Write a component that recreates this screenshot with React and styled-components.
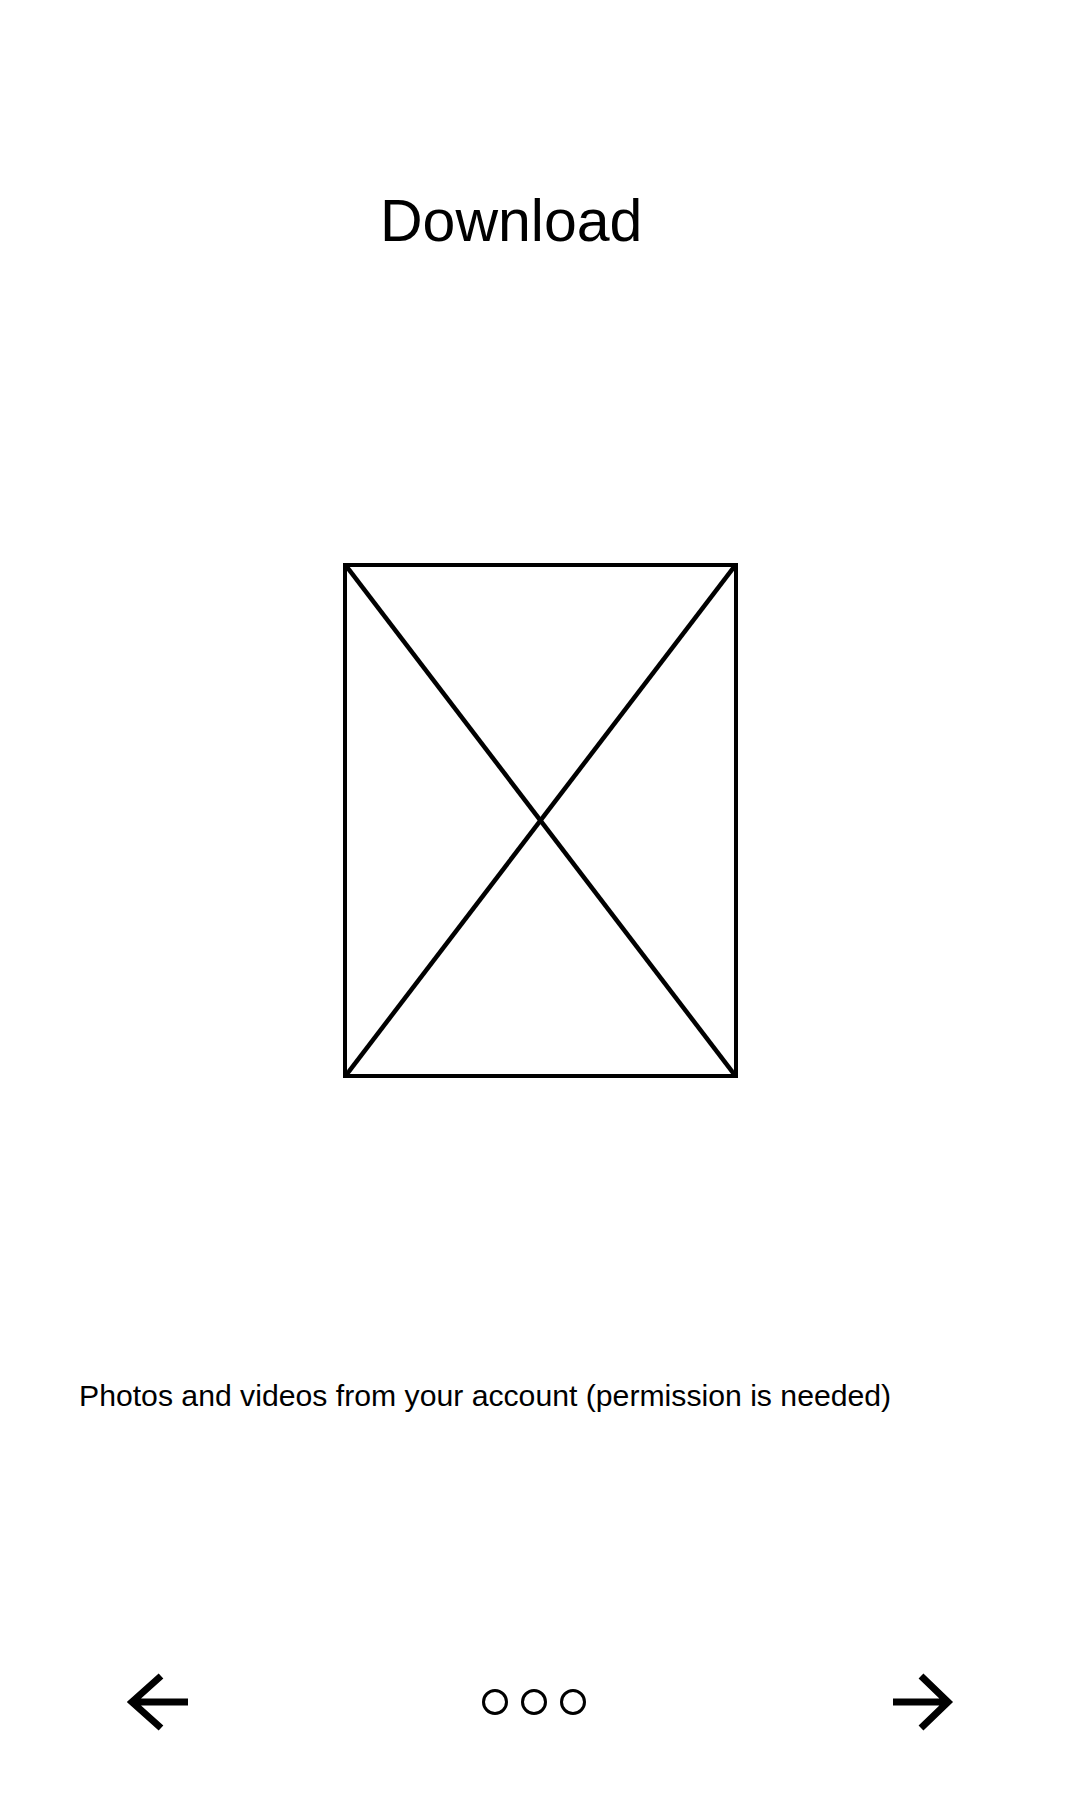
import * as React from 'react'
import styled, { createGlobalStyle } from 'styled-components'

const GlobalStyle = createGlobalStyle`
  html, body {
    margin: 0;
    padding: 0;
    background: #fff;
  }
  body {
    font-family: 'Liberation Sans', Arial, sans-serif;
    color: #000;
  }
`

/**
 * Onboarding page for the download step.
 * @return {JSX.Element}
 */
const App = () =>
  <>
    <GlobalStyle />
    <Page>
      <Title>Download</Title>
      <Placeholder>
        <svg width='100%' height='100%' viewBox='0 0 387 507' preserveAspectRatio='none'>
          <line x1='0' y1='0' x2='387' y2='507' stroke='#000' strokeWidth='4.5' />
          <line x1='387' y1='0' x2='0' y2='507' stroke='#000' strokeWidth='4.5' />
        </svg>
      </Placeholder>
      <Caption>Photos and videos from your account (permission is needed)</Caption>
      <Nav>
        <ArrowButton aria-label='Back'>
          <svg width='68' height='60' viewBox='0 0 68 60'>
            <path d='M8 30 H64 M37 4 L8 30 L37 56' fill='none' stroke='#000' strokeWidth='7' />
          </svg>
        </ArrowButton>
        <Dots>
          <Dot />
          <Dot />
          <Dot />
        </Dots>
        <ArrowButton aria-label='Next' $next>
          <svg width='68' height='60' viewBox='0 0 68 60'>
            <path d='M3 30 H58 M31 4 L58 30 L31 56' fill='none' stroke='#000' strokeWidth='7' />
          </svg>
        </ArrowButton>
      </Nav>
    </Page>
  </>

const Page = styled.div`
  width: 1080px;
  height: 1800px;
  display: flex;
  flex-direction: column;
`

const Title = styled.h1`
  margin: 192px 0 0;
  padding-left: 380px;
  font-size: 59px;
  line-height: 59px;
  font-weight: 400;
`

const Placeholder = styled.div`
  margin-top: 312px;
  margin-left: 343px;
  width: 387px;
  height: 507px;
  border: 4px solid #000;
  display: flex;
`

const Caption = styled.p`
  margin: 303px 0 0;
  padding-left: 79px;
  font-size: 30.2px;
  line-height: 30px;
`

const Nav = styled.div`
  margin-top: 261px;
  padding-left: 124px;
  display: flex;
  align-items: center;
  height: 60px;
`

const ArrowButton = styled.button`
  margin-left: ${props => props.$next ? '304px' : '0'};
  padding: 0;
  border: 0;
  background: none;
  width: 68px;
  height: 60px;
  display: flex;
`

const Dots = styled.div`
  margin-left: 290px;
  display: flex;
  gap: 13px;
`

const Dot = styled.span`
  width: 20px;
  height: 20px;
  border: 3px solid #000;
  border-radius: 50%;
`

export default App
